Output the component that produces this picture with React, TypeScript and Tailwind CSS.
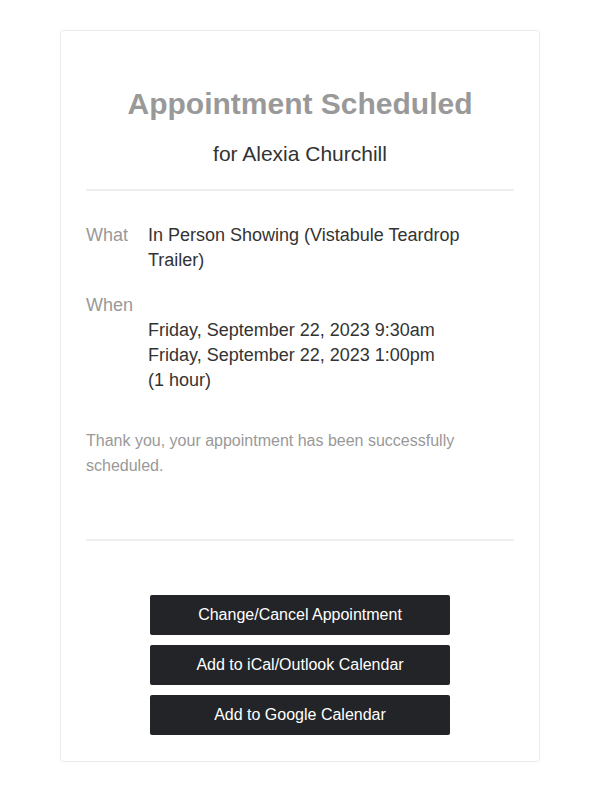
export default function App() {
  return (
    <div className="min-h-[800px] bg-white pt-[30px] font-['Liberation_Sans',Arial,sans-serif]">
      <div className="mx-auto w-[480px] rounded-[3px] border border-[#ebebeb] px-[25px] pb-[26px] pt-[56px]">
        <h1 className="text-center text-[30px] font-bold leading-[33px] text-[#999]">
          Appointment Scheduled
        </h1>
        <div className="mt-[19px] text-center text-[21px] leading-[30px] text-[#333]">
          for Alexia Churchill
        </div>
        <div className="mt-[20px] h-[2px] bg-[#eee]" />

        <div className="mt-[32px] flex text-[18px] leading-[25px]">
          <div className="w-[62px] shrink-0 text-[#999]">What</div>
          <div className="pr-[50px] text-[#333]">In Person Showing (Vistabule Teardrop Trailer)</div>
        </div>
        <div className="mt-[20px] flex text-[18px] leading-[25px]">
          <div className="w-[62px] shrink-0 text-[#999]">When</div>
          <div className="pt-[25px] text-[#333]">
            <div>Friday, September 22, 2023 9:30am</div>
            <div>Friday, September 22, 2023 1:00pm</div>
            <div>(1 hour)</div>
          </div>
        </div>

        <p className="mt-[35px] pr-[50px] text-[16px] leading-[25px] text-[#999]">
          Thank you, your appointment has been successfully scheduled.
        </p>
        <div className="mt-[61px] h-[2px] bg-[#eee]" />

        <div className="mt-[54px] flex flex-col items-center gap-[10px]">
          {["Change/Cancel Appointment", "Add to iCal/Outlook Calendar", "Add to Google Calendar"].map((label) => (
            <button
              key={label}
              className="h-[40px] w-[300px] rounded-[2px] bg-[#232427] text-[16px] text-white"
            >
              {label}
            </button>
          ))}
        </div>
      </div>
    </div>
  );
}
